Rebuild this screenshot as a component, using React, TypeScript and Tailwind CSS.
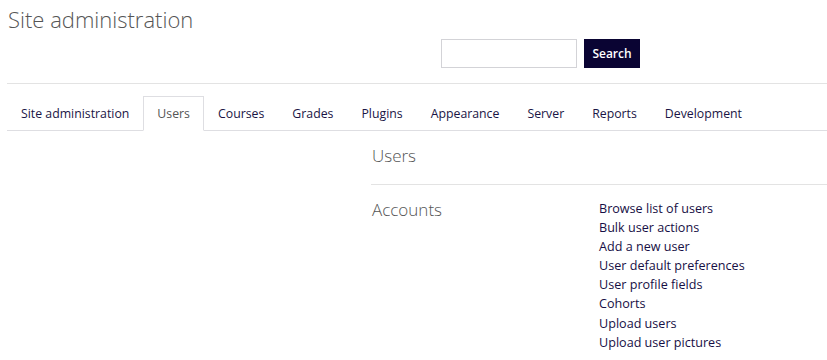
const tabs = [
  "Site administration",
  "Users",
  "Courses",
  "Grades",
  "Plugins",
  "Appearance",
  "Server",
  "Reports",
  "Development",
];

const accountLinks = [
  "Browse list of users",
  "Bulk user actions",
  "Add a new user",
  "User default preferences",
  "User profile fields",
  "Cohorts",
  "Upload users",
  "Upload user pictures",
];

export default function App() {
  return (
    <div
      className="h-[360px] w-[827px] overflow-hidden bg-white text-[12.3px] text-[#333]"
      style={{ fontFamily: '"Open Sans", "Noto Sans", sans-serif' }}
    >
      <div className="pl-[8px] pt-[4px]">
        <h1 className="text-[22px] font-light leading-[30px] text-[#555]">
          Site administration
        </h1>
      </div>

      <div className="ml-[7px] flex items-center border-b border-[#e3e3e3] pb-[15px] pl-[434px] pt-[5px]">
        <input
          type="text"
          className="h-[29px] w-[136px] border border-[#d3d3d7] bg-white outline-none"
        />
        <button className="ml-[7px] h-[29px] w-[56px] bg-[#0a0433] text-[12px] font-semibold text-white">
          Search
        </button>
      </div>

      <nav className="ml-[7px] mt-[12px] flex border-b border-[#dedee2]">
        {tabs.map((tab) => (
          <div
            key={tab}
            className={
              tab === "Users"
                ? "-mb-px border border-b-white border-[#dedee2] bg-white px-[13px] pt-[1px] leading-[31px] text-[#555]"
                : "border border-transparent px-[13px] pt-[1px] leading-[31px] text-[#1a1545]"
            }
          >
            {tab}
          </div>
        ))}
      </nav>

      <div className="ml-[371px]">
        <div className="border-b border-[#e3e3e3] pb-[17px] pl-[1px] pt-[14px]">
          <h2 className="text-[17px] font-light leading-[22px] text-[#555]">Users</h2>
        </div>
        <div className="flex pt-[14px]">
          <h3 className="w-[228px] pl-[1px] text-[17px] font-light leading-[22px] text-[#555]">
            Accounts
          </h3>
          <ul>
            {accountLinks.map((link) => (
              <li key={link} className="leading-[19.1px]">
                <a href="#" className="text-[12.6px] text-[#170f45]">
                  {link}
                </a>
              </li>
            ))}
          </ul>
        </div>
      </div>
    </div>
  );
}
